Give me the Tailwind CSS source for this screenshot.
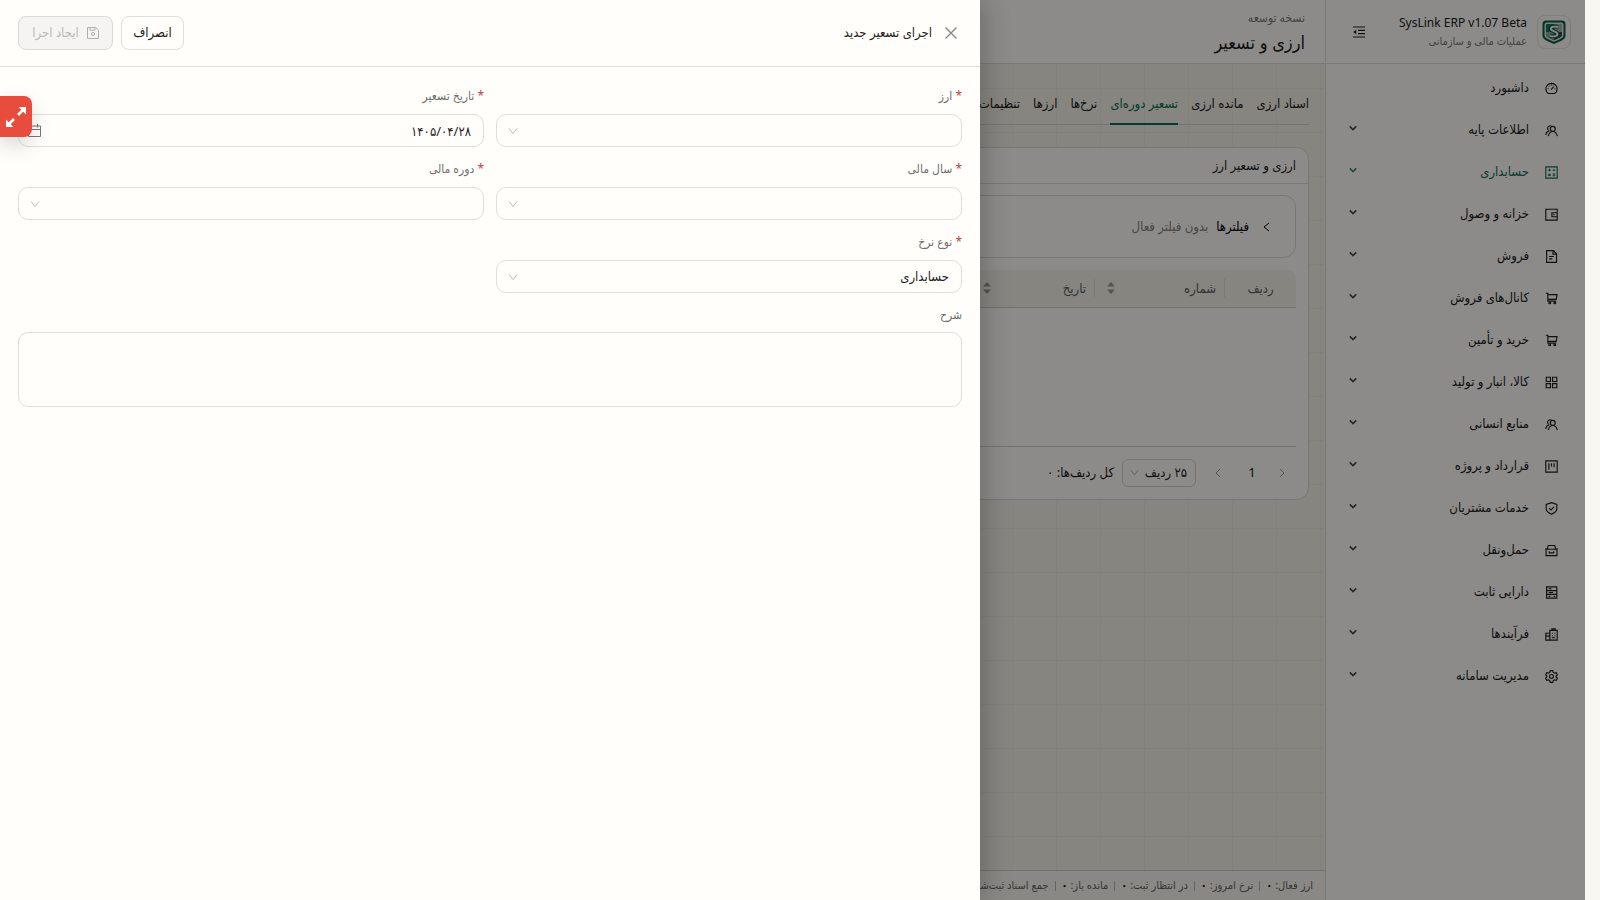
<!DOCTYPE html>
<html lang="fa" dir="rtl">
<head>
<meta charset="utf-8">
<meta name="viewport" content="width=device-width, initial-scale=1">
<title>SysLink ERP</title>
<script src="https://cdn.jsdelivr.net/npm/@tailwindcss/browser@4"></script>
</head>
<body class="bg-[#f8f7f2] font-['Noto_Sans','DejaVu_Sans_Condensed','DejaVu_Sans',sans-serif] text-xs text-[#1c1c1c]">
<svg class="hidden">
  <defs>
    <symbol id="i-dash" viewBox="0 0 16 16"><path d="M4 14.2A6.9 6.9 0 1 1 12 14.2Z"/><path d="M7.5 9.5 10.5 6M8 3.2v1.2M3.4 8h1M11.8 8.2h1M4.7 4.8l.7.7M11 4.8l-.4.4"/></symbol>
    <symbol id="i-team" viewBox="0 0 16 16"><circle cx="9.6" cy="6" r="3"/><path d="M4 15c.8-3.400 2.700-5.800 5.600-5.800s4.800 2.400 5.700 5.800M5.200 8.400A3.200 3.200 0 1 1 7.800 2.400M.8 13.500c.5-2.600 1.900-4.400 4.400-5.100"/></symbol>
    <symbol id="i-acc" viewBox="0 0 16 16"><path d="M1 1h14v14H1zM4 5h3M5.500 3.500v3M9.500 5h3M4.200 9.700l2.500 2.500M6.700 9.700l-2.500 2.500M9.500 10h3M9.500 12h3"/></symbol>
    <symbol id="i-wallet" viewBox="0 0 16 16"><path d="M1 1.500h14v13.500H1zM15 5.800H8.500v4.900H15M10.300 8.200h1.500"/></symbol>
    <symbol id="i-file" viewBox="0 0 16 16"><path d="M2 .8h8.500l3.700 3.800v10.600H2zM9.900 1v4h4M5 8h6M5 11h4"/></symbol>
    <symbol id="i-cart" viewBox="0 0 16 16"><path d="M1 1.500h2.500v9.700h10.300M3.500 3.200h11.300l-1 5.900H3.800"/><circle cx="5.800" cy="13.400" r="1.100"/><circle cx="12" cy="13.400" r="1.100"/></symbol>
    <symbol id="i-grid" viewBox="0 0 16 16"><path d="M1.500 1.500h5.200v5.200H1.500zM9.300 1.500h5.200v5.200H9.300zM1.500 9.300h5.200v5.200H1.500zM9.300 9.300h5.200v5.200H9.300z"/></symbol>
    <symbol id="i-proj" viewBox="0 0 16 16"><path d="M1 1h14v14H1zM4.800 4v8M8 4v4M11.200 4v5"/></symbol>
    <symbol id="i-shield" viewBox="0 0 16 16"><path d="M8 .8 14.500 3v6c0 2.500-3 4.500-6.500 6.200C4.500 13.500 1.500 11.500 1.500 9V3zM5.200 7.700l2.200 2.200 3.600-3.900"/></symbol>
    <symbol id="i-car" viewBox="0 0 16 16"><path d="M2.800 6.500 4 1.800h8l1.200 4.700M1.300 6.500h13.400v7.800H1.300zM5.300 9v1.900h5.400V9M.5 5.500l1.500 1M15.500 5.500l-1.500 1"/></symbol>
    <symbol id="i-asset" viewBox="0 0 16 16"><path d="M2 1h12.500v14H2zM2 5.700h12.500M2 10.300h12.500M4.500 3.400h3.500M4.500 8h5.500M10.500 12.700h2M4.500 12.700h2"/></symbol>
    <symbol id="i-proc" viewBox="0 0 16 16"><path d="M6 3h9v12H6zM1 6.500h5V15H1zM8.500 3V1h4v2M8.500 6.500h1.200M11.500 6.500h1.200M8.500 9.500h1.200M11.500 9.500h1.200M8.500 12h4M1 10h5"/></symbol>
    <symbol id="i-gear" viewBox="0 0 16 16"><path d="M6.500.8h3l.6 2.200 1.500.9 2.200-.6 1.500 2.600L13.700 7.500v1l1.600 1.600-1.500 2.600-2.200-.6-1.500.9-.6 2.200h-3L5.900 13l-1.500-.9-2.200.6L.7 10.100 2.300 8.500v-1L.7 5.900l1.500-2.600 2.200.6L5.900 3z"/><circle cx="8" cy="8" r="2.400"/></symbol>
    <symbol id="i-down" viewBox="0 0 10 10"><path d="M1 2.500l4 5 4-5"/></symbol>
    <symbol id="i-caret" viewBox="0 0 10 10"><path d="M1 3l4 4 4-4"/></symbol>
  </defs>
</svg>

<div class="relative mr-[15px] flex h-screen overflow-hidden bg-[#f4f2ea] bg-[linear-gradient(to_right,#dcded64d_1px,transparent_1px),linear-gradient(to_bottom,#dcded64d_1px,transparent_1px)] bg-size-[44px_44px]">

  <aside class="flex w-[260px] shrink-0 flex-col border-l border-[#dcdcd6] bg-[#fffdfa]">
    <div class="flex h-16 items-center gap-2 border-b border-[#dcdcd6] pr-[14px] pl-[25px]">
      <div class="flex size-[34px] items-center justify-center rounded-lg border border-[#e6e4de]">
        <svg class="size-[26px]" viewBox="0 0 26 26">
          <path d="M5 1.500h16a3.500 3.500 0 0 1 3.500 3.500v12c0 3-5 5.500-11.500 8-6.500-2.500-11.500-5-11.500-8V5A3.500 3.500 0 0 1 5 1.500z" fill="#0d5c4c"/>
          <path d="M6 3.500h14a2.500 2.500 0 0 1 2.500 2.500v10.500c0 2.200-4.500 4.300-9.500 6.300-5-2-9.500-4.100-9.500-6.300V6A2.500 2.500 0 0 1 6 3.500z" fill="#dfe8e2"/>
          <path d="M6 5h14a1 1 0 0 1 1 1v10c0 1.500-3.500 3.300-8 5.200-4.500-1.900-8-3.700-8-5.200V6a1 1 0 0 1 1-1z" fill="#16705c"/>
          <path d="M13 5h7a1 1 0 0 1 1 1v7h-8z" fill="#9fb5a8"/>
          <path d="M5 13h8v8.200C8.500 19.300 5 17.500 5 16z" fill="#8ba79a"/>
          <path d="M13 13h8v3c0 1.500-3.500 3.300-8 5.200z" fill="#4a3f45"/>
          <path d="M17 8c-4.500-1-7.500 0-7 2.300.5 2.200 6.500 2 6.500 4.600 0 2.500-4 3-7.500 1.900" fill="none" stroke="#0d5c4c" stroke-width="4"/>
          <path d="M17 8c-4.500-1-7.500 0-7 2.300.5 2.200 6.500 2 6.500 4.600 0 2.500-4 3-7.500 1.900" fill="none" stroke="#f5fbf7" stroke-width="1.800"/>
        </svg>
      </div>
      <div class="flex flex-1 flex-col items-start pr-[2px] pb-[2px] whitespace-nowrap">
        <strong class="text-xs leading-5 font-normal" dir="ltr">SysLink ERP v1.07 Beta</strong>
        <span class="text-[11px] leading-4 text-[#7c7c78]">عملیات مالی و سازمانی</span>
      </div>
      <button type="button" aria-label="بستن منو" class="flex size-4 items-center justify-center">
        <svg class="size-3 fill-none stroke-[#222]" viewBox="0 0 12 12"><path d="M0 1h12M5 4.300h7M5 7.700h7M0 11h12" stroke-width="1.200"/><path d="M3.200 3.700v4.600L.3 6z" fill="#222" stroke="none"/></svg>
      </button>
    </div>
    <nav id="menu" class="flex flex-col pt-[3px] text-[13px]"></nav>
  </aside>

  <div class="flex min-w-0 flex-1 flex-col">
    <header class="flex h-16 shrink-0 flex-col justify-center border-b border-[#dcdcd6] bg-[#fffdfa] px-5">
      <span class="text-xs leading-5 text-[#7c7c78]">نسخه توسعه</span>
      <h1 class="text-lg leading-7">ارزی و تسعیر</h1>
    </header>

    <main class="flex min-h-0 flex-1 flex-col gap-[22px] px-4 pt-[18px]">
      <nav class="flex h-[43px] gap-[13px] border-b border-[#d3d6cf] text-[13px] leading-[42px] whitespace-nowrap">
        <a href="#">اسناد ارزی</a>
        <a href="#">مانده ارزی</a>
        <a href="#" class="h-[43px] border-b-2 border-[#0f6b58] text-[#0f6b58]">تسعیر دوره‌ای</a>
        <a href="#">نرخ‌ها</a>
        <a href="#">ارزها</a>
        <a href="#">تنظیمات</a>
      </nav>

      <section class="rounded-xl border border-[#d9dad3] bg-[#fffdfa]">
        <h2 class="border-b border-[#dcdcd6] px-3 text-[13px] leading-[35px]">ارزی و تسعیر ارز</h2>
        <div class="flex flex-col gap-3 px-3 pt-[11px] pb-3">
          <div class="flex h-[63px] items-center gap-2 rounded-xl border border-[#d9dad3] px-6 text-[13px]">
            <svg class="ml-1 size-[10px] fill-none stroke-black" viewBox="0 0 10 10"><path d="M8 1 3 5l5 4"/></svg>
            <span class="text-black">فیلترها</span>
            <span class="text-[#85857f]">بدون فیلتر فعال</span>
          </div>
          <div class="h-[177px] border-b border-[#d3d3cc]">
            <table class="w-full table-fixed text-[13px] text-[#5c615c]">
              <thead>
                <tr class="h-[37px] border-b border-[#cfcfc8] bg-[#f4f2ea]">
                  <th class="w-[71px] rounded-tr-lg font-normal">ردیف</th>
                  <th class="w-[130px] font-normal"><div class="flex h-[18px] items-center justify-between border-r border-[#dcdcd6] px-2"><span>شماره</span><svg class="ml-1 h-3 w-2 fill-[#9a9a95]" viewBox="0 0 8 12"><path d="M0 4.500 4 0l4 4.500zM0 7.500h8L4 12z"/></svg></div></th>
                  <th class="w-[120px] font-normal"><div class="flex h-[18px] items-center justify-between border-r border-[#dcdcd6] px-2"><span>تاریخ</span><svg class="h-3 w-2 fill-[#9a9a95]" viewBox="0 0 8 12"><path d="M0 4.500 4 0l4 4.500zM0 7.500h8L4 12z"/></svg></div></th>
                  <th></th>
                </tr>
              </thead>
            </table>
          </div>
          <div class="flex h-7 items-center text-[13px]">
            <button type="button" disabled aria-label="صفحه قبل" class="flex w-7 justify-center"><svg class="size-2 fill-none stroke-[#9d9d98]" viewBox="0 0 8 8"><path d="M2 0l4 4-4 4"/></svg></button>
            <button type="button" class="w-8">1</button>
            <button type="button" disabled aria-label="صفحه بعد" class="mr-1 flex w-7 justify-center"><svg class="size-2 fill-none stroke-[#9d9d98]" viewBox="0 0 8 8"><path d="M6 0L2 4l4 4"/></svg></button>
            <div class="relative mr-2">
              <select aria-label="تعداد ردیف" class="h-7 w-[74px] appearance-none rounded-md border border-[#d3d3cc] pr-2"><option>۲۵ ردیف</option></select>
              <svg class="pointer-events-none absolute top-[9px] left-2 size-[9px] fill-none stroke-[#aaa]"><use href="#i-down"/></svg>
            </div>
            <span class="mr-2">کل ردیف‌ها: ۰</span>
          </div>
        </div>
      </section>
    </main>

    <footer class="flex h-[30px] shrink-0 items-center gap-[6px] overflow-hidden border-t border-[#cfcfc8] bg-[#f9f8f3] px-3 text-[11px] whitespace-nowrap text-[#62665f]">
      <span>ارز فعال: <b class="text-black">۰</b></span><i class="h-[10px] w-px bg-[#bbb]"></i>
      <span>نرخ امروز: <b class="text-black">۰</b></span><i class="h-[10px] w-px bg-[#bbb]"></i>
      <span>در انتظار ثبت: <b class="text-black">۰</b></span><i class="h-[10px] w-px bg-[#bbb]"></i>
      <span>مانده باز: <b class="text-black">۰</b></span><i class="h-[10px] w-px bg-[#bbb]"></i>
      <span>جمع اسناد ثبت‌شده: <b class="text-black">۰</b></span>
    </footer>
  </div>

  <div class="absolute inset-0 bg-black/45"></div>

  <div role="dialog" aria-labelledby="dlg-title" class="absolute inset-y-0 left-0 w-[980px] max-w-full bg-[#fffefb] shadow-[6px_0_24px_rgba(0,0,0,0.2)]">
    <div class="flex h-[67px] items-center gap-2 border-b border-[#dedfdb] px-[18px]">
      <button type="button" aria-label="بستن" class="flex size-[22px] items-center justify-center"><svg class="size-3 fill-none stroke-[#858585] stroke-[1.300]" viewBox="0 0 12 12"><path d="M.5.5l11 11M11.500.5l-11 11"/></svg></button>
      <h2 id="dlg-title" class="flex-1 text-[13px]">اجرای تسعیر جدید</h2>
      <button type="button" class="h-[34px] w-[63px] rounded-lg border border-[#dedfdb] text-[13px]">انصراف</button>
      <button type="button" disabled class="flex h-[34px] w-[95px] items-center justify-center gap-2 rounded-lg border border-[#d9d9d6] bg-[#f5f4f2] text-[13px] text-[#b9b9b6]">
        <svg class="size-3 fill-none stroke-[#b0b0ad]" viewBox="0 0 12 12"><path d="M.5.5h8.300l2.700 2.700v8.300H.5zM3 .5v2.700h5V.5"/><circle cx="6" cy="7" r="1.500"/></svg>
        ایجاد اجرا
      </button>
    </div>

    <form class="grid grid-cols-2 gap-3 px-[18px] pt-[19px] text-[13px]">
      <div class="flex flex-col gap-2">
        <label for="f-cur" class="text-xs leading-5 text-[#6b716c]"><span class="text-[#b8404a]">*</span> ارز</label>
        <div class="relative">
          <select id="f-cur" class="h-[33px] w-full appearance-none rounded-[10px] border border-[#dedfdb] px-3"><option></option></select>
          <svg class="pointer-events-none absolute top-3 left-3 size-[10px] fill-none stroke-[#bdbdbd]"><use href="#i-down"/></svg>
        </div>
      </div>
      <div class="flex flex-col gap-2">
        <label for="f-date" class="text-xs leading-5 text-[#6b716c]"><span class="text-[#b8404a]">*</span> تاریخ تسعیر</label>
        <div class="relative">
          <input id="f-date" type="text" value="۱۴۰۵/۰۴/۲۸" class="h-[33px] w-full rounded-[10px] border border-[#dedfdb] px-3">
          <svg class="pointer-events-none absolute top-[10px] left-[10px] h-[13px] w-[14px] fill-none stroke-[#777]" viewBox="0 0 14 13"><path d="M.5 2h12v10.500H.5zM.5 5.500h12M3.500 0v3.500M9.500 0v3.500"/></svg>
        </div>
      </div>
      <div class="flex flex-col gap-2">
        <label for="f-year" class="text-xs leading-5 text-[#6b716c]"><span class="text-[#b8404a]">*</span> سال مالی</label>
        <div class="relative">
          <select id="f-year" class="h-[33px] w-full appearance-none rounded-[10px] border border-[#dedfdb] px-3"><option></option></select>
          <svg class="pointer-events-none absolute top-3 left-3 size-[10px] fill-none stroke-[#bdbdbd]"><use href="#i-down"/></svg>
        </div>
      </div>
      <div class="flex flex-col gap-2">
        <label for="f-period" class="text-xs leading-5 text-[#6b716c]"><span class="text-[#b8404a]">*</span> دوره مالی</label>
        <div class="relative">
          <select id="f-period" class="h-[33px] w-full appearance-none rounded-[10px] border border-[#dedfdb] px-3"><option></option></select>
          <svg class="pointer-events-none absolute top-3 left-3 size-[10px] fill-none stroke-[#bdbdbd]"><use href="#i-down"/></svg>
        </div>
      </div>
      <div class="flex flex-col gap-2">
        <label for="f-rate" class="text-xs leading-5 text-[#6b716c]"><span class="text-[#b8404a]">*</span> نوع نرخ</label>
        <div class="relative">
          <select id="f-rate" class="h-[33px] w-full appearance-none rounded-[10px] border border-[#dedfdb] px-3"><option>حسابداری</option></select>
          <svg class="pointer-events-none absolute top-3 left-3 size-[10px] fill-none stroke-[#bdbdbd]"><use href="#i-down"/></svg>
        </div>
      </div>
      <div class="col-span-2 flex flex-col gap-[7px]">
        <label for="f-desc" class="text-xs leading-5 text-[#6b716c]">شرح</label>
        <textarea id="f-desc" class="h-[75px] w-full resize-none rounded-[10px] border border-[#dedfdb] px-3 py-2"></textarea>
      </div>
    </form>
  </div>

  <button type="button" aria-label="تمام صفحه" class="absolute top-24 left-0 flex h-[41px] w-8 items-center justify-center rounded-r-lg bg-[#e74c3c] shadow-[0_8px_20px_rgba(0,0,0,0.15)]">
    <svg class="size-5 fill-white stroke-white" viewBox="0 0 20 20"><path d="M12 8l5-5M8 12l-5 5" stroke-width="2.600" fill="none"/><path d="M12.500 0H20v7.500zM0 12.500V20h7.500z" stroke="none"/></svg>
  </button>
</div>

<script>
const items = [
  ['dash','داشبورد'],['team','اطلاعات پایه'],['acc','حسابداری'],['wallet','خزانه و وصول'],['file','فروش'],
  ['cart','کانال‌های فروش'],['cart','خرید و تأمین'],['grid','کالا، انبار و تولید'],['team','منابع انسانی'],
  ['proj','قرارداد و پروژه'],['shield','خدمات مشتریان'],['car','حمل‌ونقل'],['asset','دارایی ثابت'],['proc','فرآیندها'],['gear','مدیریت سامانه']
];
document.getElementById('menu').innerHTML = items.map(([icon, name], i) => `
  <a href="#" class="flex h-[42px] items-center pr-[27px] pl-[23px] ${i === 2 ? 'text-[#0f6b58]' : 'text-[#1c1c1c]'}">
    <svg class="size-[13px] fill-none stroke-current stroke-[1.400]"><use href="#i-${icon}"/></svg>
    <span class="mr-4 flex-1">${name}</span>
    ${i ? '<svg class="mb-1 size-2 fill-none stroke-current stroke-2 opacity-80"><use href="#i-caret"/></svg>' : ''}
  </a>`).join('');
</script>
</body>
</html>
